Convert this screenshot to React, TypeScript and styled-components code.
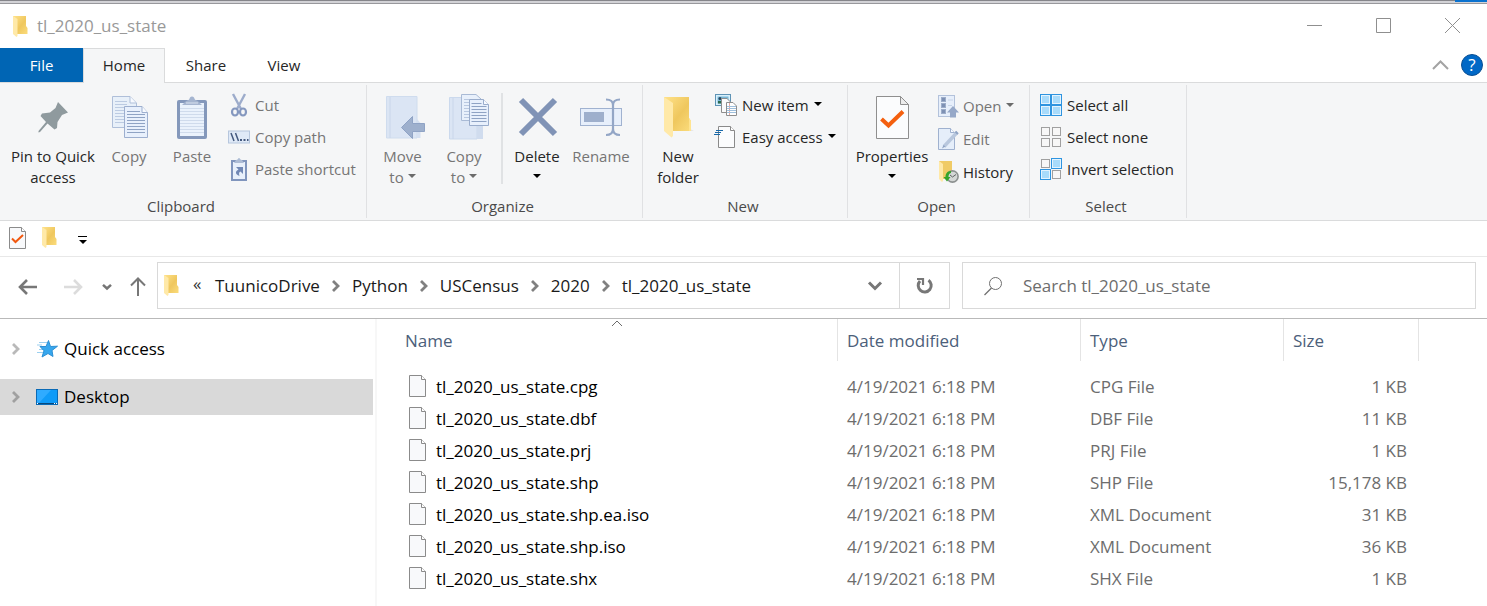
import React, { useId } from 'react';
import styled, { createGlobalStyle, css } from 'styled-components';

const GlobalStyle = createGlobalStyle`
  *, *::before, *::after { box-sizing: border-box; }
  body {
    margin: 0;
    background: #fff;
    color: #000;
    font-family: "Open Sans", "Noto Sans", sans-serif;
    font-size: 17px;
    line-height: 24px;
  }
  button, input { font: inherit; color: inherit; margin: 0; }
  svg { display: block; flex: none; overflow: visible; }
`;

/* ---------- icons ---------- */

const FolderIcon = ({ large }: { large?: boolean }) => {
  const id = useId();
  return (
    <svg width={large ? 28 : 15} height={large ? 41 : 21} viewBox={large ? '0 0 28 41' : '0 0 15 21'}>
      <defs>
        <linearGradient id={id} x1="0" x2="1" y1="0" y2="1">
          <stop offset="0" stopColor="#ffe28a" />
          <stop offset="0.55" stopColor="#efc75e" />
          <stop offset="1" stopColor="#fbdc7c" />
        </linearGradient>
      </defs>
      {large ? (
        <>
          <path d="M0 0H25V21L27 24V34H0Z" fill={`url(#${id})`} />
          <path d="M25 21L27 24V34H25Z" fill="#ffe491" />
          <path d="M0 0L9 6V39L7.500 40.500L0 34Z" fill="#ffe9a8" />
          <path d="M27 34h3l-3-1.500z" fill="#e4e4e4" />
        </>
      ) : (
        <>
          <path d="M0 0H13V10L14.500 12V18H0Z" fill={`url(#${id})`} />
          <path d="M0 0L4.500 3V20L3.500 21L0 18Z" fill="#ffe9a8" />
        </>
      )}
    </svg>
  );
};

const PageIcon = ({ checked }: { checked?: boolean }) => (
  <svg width="17" height="22" viewBox="0 0 17 22">
    <path d="M.5 .5H12.500L16.500 4.500V21.500H.5Z" fill="#f8f9fb" stroke="#8b8b8b" />
    <path d="M12.500 .5V4.500H16.500" fill="#fff" stroke="#8b8b8b" />
    {checked && <path d="M3 11.500L6.500 15L14 8" fill="none" stroke="#f1580f" strokeWidth="2" />}
  </svg>
);

const PropertiesIcon = () => (
  <svg width="33" height="43" viewBox="0 0 33 43">
    <path d="M.5 .5H24.500L32.500 8.500V42.500H.5Z" fill="#fbfcfd" stroke="#8f8f8f" />
    <path d="M24.500 .5V8.500H32.500Z" fill="#ececec" stroke="#8f8f8f" />
    <path d="M5.500 23L12.500 29.500L27 15.500" fill="none" stroke="#f4600f" strokeWidth="4" />
  </svg>
);

const PinIcon = () => (
  <svg width="31" height="31" viewBox="0 0 31 31">
    <path
      d="M20 0L30 10.500L24 13L19.500 20L19 26L16.500 27.500L9.500 21.500L2 30L.5 30.500L.5 29L8 20L2.500 14L4 11.500L12 10.500L17.500 6Z"
      fill="#8f9a9e"
    />
  </svg>
);

const sheetLines = (x: number, y: number, w: number, n: number, step: number, color: string) =>
  Array.from({ length: n }, (_, i) => (
    <path key={i} d={`M${x} ${y + i * step}h${w}`} stroke={color} />
  ));

const CopyIcon = () => (
  <svg width="39" height="43" viewBox="-2 0 39 43">
    <path d="M.5 .5H18L24.500 7V31.500H.5Z" fill="#e8f0f9" stroke="#afbfd9" />
    <path d="M18 .5V7H24" fill="#f7faff" stroke="#afbfd9" />
    {sheetLines(3, 5.5, 12, 8, 3, '#bccbe2')}
    <path d="M12.500 10.500H30L35.500 16.500V41.500H12.500Z" fill="#e8f0fc" stroke="#9dafcf" />
    <path d="M30 10.500V16.500H35.500" fill="#f7faff" stroke="#9dafcf" />
    {sheetLines(15, 15.5, 13, 1, 3, '#8fa3c4')}
    {sheetLines(15, 18.5, 18, 7, 3, '#8fa3c4')}
  </svg>
);

const PasteIcon = () => (
  <svg width="30" height="43" viewBox="0 0 30 43">
    <rect x="0" y="4" width="30" height="39" rx="2" fill="#8498bb" />
    <rect x="3" y="7" width="24" height="33" fill="#eaf2fc" />
    {sheetLines(3, 12.5, 24, 9, 3, '#cfdbec')}
    <path d="M5 9L8 6C10 4 12 5 13 1.500C14 0 16 0 17 1.500C18 5 20 4 22 6L25 9Z" fill="#a5b5d0" />
    <path d="M9 7H21" stroke="#d9e2f0" />
  </svg>
);

const CutIcon = () => (
  <svg width="22" height="24" viewBox="0 0 22 24" fill="none">
    <path d="M5 1L13 16M17 1L9 16" stroke="#9daccb" strokeWidth="2.400" />
    <ellipse cx="7" cy="19" rx="3" ry="3.500" stroke="#8598bf" strokeWidth="2.200" />
    <ellipse cx="15" cy="19" rx="3" ry="3.500" stroke="#8598bf" strokeWidth="2.200" />
  </svg>
);

const CopyPathIcon = () => (
  <svg width="22" height="14" viewBox="0 0 22 14">
    <rect x=".5" y="1" width="21" height="12" fill="#dfe9f7" stroke="#b6c6dd" />
    <path d="M3 3L6 11M7.500 3L10.500 11" stroke="#44597f" strokeWidth="1.500" />
    <path d="M12 10h2M15.500 10h2M19 10h1.500" stroke="#44597f" strokeWidth="2" />
  </svg>
);

const PasteShortcutIcon = () => (
  <svg width="22" height="23" viewBox="0 0 22 23">
    <rect x="4" y="3" width="14" height="19" fill="#e8f0fb" stroke="#8095bd" strokeWidth="2" />
    <path d="M6 5L8 2C10 2 10 0 11 0S12 2 14 2L16 5Z" fill="#adbcd5" />
    <path d="M8 9H15V16L12.500 13.500C10.500 14.500 11 16 11.500 18C7 16.500 7 13 10.500 11.500Z" fill="#7188b5" />
  </svg>
);

const MoveIcon = () => (
  <svg width="47" height="43" viewBox="-7 0 47 43">
    <path d="M.5 .5H31V42H.5Z" fill="#dbe5f4" stroke="#cfdcee" />
    <path d="M4 1V42" stroke="#c9d6ea" />
    <path d="M31 23L34.500 27V42H31Z" fill="#d5e0f1" />
    <path d="M15.500 31.500L26.500 20.500V27.500H38.500V35.500H26.500V42.500Z" fill="#9eb0cd" stroke="#8fa3c5" />
  </svg>
);

const CopyToIcon = () => (
  <svg width="50" height="46" viewBox="-10 0 50 46">
    <path d="M.5 3.500H28V45H.5Z" fill="#dbe5f4" stroke="#cbd9ed" />
    <path d="M4 4V45" stroke="#c9d6ea" />
    <path d="M28 30H34V45H28Z" fill="#d0dcee" />
    <path d="M12.500 .5H27L32 5V26.500H12.500Z" fill="#e8f0fb" stroke="#a9bad5" />
    {sheetLines(15, 5.5, 7, 7, 3, '#b9c8e0')}
    <path d="M20.500 5.500H34.500L39.500 10.500V31.500H20.500Z" fill="#e8f0fc" stroke="#9aadcc" />
    <path d="M34.500 5.500V10.500H39.500" fill="#f7faff" stroke="#9aadcc" />
    {sheetLines(22.5, 9.5, 10, 1, 3, '#8fa3c4')}
    {sheetLines(22.5, 12.5, 15, 6, 3, '#8fa3c4')}
  </svg>
);

const DeleteIcon = () => (
  <svg width="38" height="38" viewBox="-1 0 38 38">
    <path d="M2 2L36 36M36 2L2 36" stroke="#8093b6" strokeWidth="6" />
  </svg>
);

const RenameIcon = () => (
  <svg width="42" height="38" viewBox="0 0 42 38">
    <rect x=".5" y="10.500" width="41" height="17" fill="#e7effb" stroke="#a0b2d0" />
    <rect x="4" y="14" width="20" height="10" fill="#9eafcc" />
    <path
      d="M26 1.500C31 1.500 33 3 33 7V31C33 35 31 37 26 37M40 1.500C35 1.500 33 3 33 7M33 31C33 35 35 37 40 37"
      fill="none"
      stroke="#93a6c6"
      strokeWidth="2.200"
    />
  </svg>
);

const NewItemIcon = () => (
  <svg width="22" height="22" viewBox="0 0 22 22">
    <rect x=".5" y=".5" width="15" height="11" fill="#d8f0fc" stroke="#5e93b5" />
    <rect x="2.500" y="2.500" width="11" height="7" fill="#79b7d6" />
    <circle cx="5" cy="4.500" r="1.500" fill="#24445c" />
    <path d="M3 9.500V7h4v2.500z" fill="#2d6b50" />
    <path d="M6.500 4.500H12L15.500 8V18.500H6.500Z" fill="#fbfbfb" stroke="#8e8e8e" />
    <path d="M11.500 8.500H18L21.500 12V21.500H11.500Z" fill="#fff" stroke="#8e8e8e" />
    <path d="M14.500 9V21" stroke="#e7a6a0" />
    {sheetLines(12, 12.5, 9, 4, 2, '#9fc0dd')}
  </svg>
);

const EasyAccessIcon = () => (
  <svg width="22" height="22" viewBox="0 0 22 22">
    <path d="M3.500 .5H15.500L19.500 4.500V21.500H3.500Z" fill="#fbfcfd" stroke="#8a8a8a" />
    <path d="M15.500 .5V4.500H19.500" fill="#fff" stroke="#8a8a8a" />
    <path d="M1 4.500H8M0 6.500H6M-1 8.500H5" stroke="#1868a8" strokeWidth="1.200" />
  </svg>
);

const OpenIcon = () => (
  <svg width="20" height="23" viewBox="0 0 20 23">
    <rect x=".5" y=".5" width="16" height="21" fill="#e7effb" stroke="#b3c2db" />
    {[2, 8, 14].map((y) => (
      <rect key={y} x="3.500" y={y + 0.5} width="4" height="4" fill="#7e91b4" stroke="#9dadc9" />
    ))}
    <path d="M10 5h5M10 10.500h4" stroke="#c7d4e8" />
    <path d="M15 11L21 17.500H18V22.500H12V17.500H9Z" fill="#96a8c8" />
  </svg>
);

const EditIcon = () => (
  <svg width="20" height="22" viewBox="0 0 20 22">
    <path d="M.5 .5H12.500L16.500 4.500V21.500H.5Z" fill="#e5eefa" stroke="#9fb1cf" />
    <path d="M12.500 .5V4.500H16.500" fill="#f6faff" stroke="#9fb1cf" />
    <path d="M6 18.500L19 4.500" stroke="#b8c7dd" strokeWidth="3.500" />
    <path d="M4 20.500L7.500 18.500L5.500 17Z" fill="#8fa3c4" />
    <path d="M17.500 3.500L20 6" stroke="#8fa3c4" strokeWidth="2" />
  </svg>
);

const HistoryIcon = () => (
  <svg width="20" height="22" viewBox="0 0 20 22">
    <path d="M1 0H14V18H1Z" fill="#f0cb66" />
    <path d="M1 0L5 3V20L4 21L1 18Z" fill="#ffe9a8" />
    <circle cx="14.500" cy="15.500" r="5.600" fill="#d4d7d6" stroke="#8c9190" strokeWidth="1.600" />
    <path d="M12 14L14.500 16L18 13.500" fill="none" stroke="#5e6463" />
    <path d="M13 10C9 10 7.500 13 7.500 16H5.500L9 20.500L12.500 16H10.500C10.500 14 11 12.500 13 12Z" fill="#35a52c" />
  </svg>
);

const SelectIcon = ({ on }: { on: [boolean, boolean, boolean, boolean] }) => (
  <svg width="22" height="22" viewBox="0 0 22 22">
    {on.map((active, i) => {
      const x = (i % 2) * 11;
      const y = Math.floor(i / 2) * 11;
      return active ? (
        <g key={i}>
          <rect x={x + 0.5} y={y + 0.5} width="10" height="10" fill="#e3f3fe" stroke="#2e94e0" />
          <rect x={x + 2} y={y + 2} width="7" height="7" fill="#a8dbfb" />
        </g>
      ) : (
        <rect key={i} x={x + 1.5} y={y + 1.5} width="8" height="8" fill="#f7f7f7" stroke="#a0a0a0" />
      );
    })}
  </svg>
);

const Stroke = ({ w, h, d, color, width = 2 }: { w: number; h: number; d: string; color: string; width?: number }) => (
  <svg width={w} height={h} viewBox={`0 0 ${w} ${h}`}>
    <path d={d} fill="none" stroke={color} strokeWidth={width} />
  </svg>
);

const Chevron = ({ color = '#808080' }: { color?: string }) => (
  <Stroke w={8} h={12} d="M1 1L6 6L1 11" color={color} width={2.8} />
);

const DownChevron = ({ small }: { small?: boolean }) =>
  small ? (
    <Stroke w={10} h={6} d="M1 .8L5 4.500L9 .8" color="#757575" width={2.5} />
  ) : (
    <Stroke w={14} h={9} d="M1 1.500L7 7.500L13 1.500" color="#777" width={3} />
  );

const StarIcon = () => (
  <svg width="22" height="18" viewBox="0 0 22 18">
    <path d="M3 2.500H11M1 5H6M3 9.500H8M1 12.500H7" stroke="#9bd0f0" strokeWidth="1.200" />
    <path d="M12.500 .5L14.500 6.500L21.500 6.200L16 10.500L17 16.500L12 13.500L6 17L8 10.800L4 6.500L10 6.500Z" fill="#36a7ee" stroke="#2c8fd4" />
  </svg>
);

const DesktopIcon = () => (
  <svg width="22" height="16" viewBox="0 0 22 16">
    <rect x=".5" y=".5" width="21" height="15" fill="#0f9bf8" stroke="#0a6ab6" />
    <path d="M1 1H15L3 14H1Z" fill="#2fabff" />
    <path d="M1 14.500H21" stroke="#07487c" />
    <path d="M1 14.500h1M18 14.500h1M20 14.500h1" stroke="#fff" />
  </svg>
);

const RefreshIcon = () => (
  <svg width="18" height="18" viewBox="0 0 18 18">
    <path d="M12.500 3.200A6.500 6.500 0 1 1 4 4" fill="none" stroke="#777" strokeWidth="3" />
    <path d="M1 2H7V8" fill="none" stroke="#777" strokeWidth="2.200" />
  </svg>
);

/* ---------- window frame ---------- */

const Window = styled.div`
  display: flex;
  flex-direction: column;
  min-height: 100vh;
`;

const TopEdge = styled.div`
  display: flex;
  justify-content: flex-end;
  height: 4px;
  background: linear-gradient(#85858a 1px, #d2d2d6 1px);
  border-bottom: 1px solid #98989c;
  &::after {
    content: "";
    width: 32px;
    height: 2px;
    background: #0a72cf;
  }
`;

const TitleBar = styled.header`
  display: flex;
  align-items: center;
  height: 44px;
  padding-left: 13px;
`;

const Title = styled.h1`
  flex: 1;
  margin: 0 0 0 9px;
  font-size: 17px;
  font-weight: 400;
  color: #999;
`;

const plainButton = css`
  display: flex;
  align-items: center;
  justify-content: center;
  padding: 0;
  border: 0;
  background: none;
`;

const WindowButton = styled.button`
  ${plainButton}
  align-self: flex-start;
  width: 69px;
  height: 42px;
`;

/* ---------- ribbon ---------- */

const TabBar = styled.nav`
  display: flex;
  height: 35px;
  border-bottom: 1px solid #dadbdc;
  font-size: 15px;
`;

const Tab = styled.button<{ $kind?: 'file' | 'active'; $width: number }>`
  ${plainButton}
  width: ${(p) => p.$width}px;
  height: 35px;
  padding-bottom: 2px;
  color: #262626;
  ${(p) => p.$kind === 'file' && css`
    height: 34px;
    padding-bottom: 0;
    color: #fff;
    background: #0065b4;
  `}
  ${(p) => p.$kind === 'active' && css`
    background: #f5f6f7;
    border: 1px solid #dadbdc;
    border-bottom: 0;
  `}
`;

const TabTools = styled.div`
  display: flex;
  align-items: center;
  gap: 12px;
  margin-left: auto;
  padding-right: 4px;
`;

const IconButton = styled.button`
  ${plainButton}
`;

const HelpButton = styled.button`
  ${plainButton}
  width: 22px;
  height: 22px;
  border: 1px solid #0a4f93;
  border-radius: 50%;
  background: #0068c6;
  color: #fff;
  font-size: 17px;
  line-height: 20px;
`;

const Ribbon = styled.section`
  display: flex;
  height: 138px;
  padding: 2px 0;
  background: #f5f6f7;
  border-bottom: 1px solid #dadbdc;
  font-size: 15px;
  line-height: 21px;
  color: #262626;
`;

const Group = styled.div<{ $width: number }>`
  display: flex;
  flex-direction: column;
  flex: none;
  width: ${(p) => p.$width}px;
  border-right: 1px solid #e0e1e3;
`;

const GroupBody = styled.div<{ $indent?: number }>`
  display: flex;
  flex: 1;
  padding-left: ${(p) => p.$indent ?? 0}px;
`;

const GroupLabel = styled.div`
  padding: 0 4px 1px 0;
  text-align: center;
  color: #4a4a4a;
`;

const BigButton = styled.button<{ $width: number; $dim?: boolean }>`
  ${plainButton}
  flex-direction: column;
  justify-content: flex-start;
  width: ${(p) => p.$width}px;
  color: ${(p) => (p.$dim ? '#757575' : '#262626')};
  white-space: nowrap;
`;

const BigIcon = styled.span`
  display: flex;
  align-items: center;
  justify-content: center;
  height: 46px;
  margin: 9px 0 6px;
`;

const Line = styled.span`
  display: flex;
  align-items: center;
  gap: 4px;
  height: 21px;
`;

const Stack = styled.div<{ $loose?: boolean }>`
  display: flex;
  flex-direction: column;
  align-items: flex-start;
  gap: ${(p) => (p.$loose ? 11 : 10)}px;
  padding: ${(p) => (p.$loose ? 10 : 9)}px 0 0 2px;
`;

const SmallButton = styled.button<{ $dim?: boolean }>`
  ${plainButton}
  gap: 5px;
  height: 22px;
  color: ${(p) => (p.$dim ? '#757575' : '#262626')};
  white-space: nowrap;
`;

const Caret = styled.span<{ $dim?: boolean }>`
  border: 4px solid transparent;
  border-top-color: ${(p) => (p.$dim ? '#6b6b6b' : '#000')};
  border-bottom: 0;
`;

const MenuCaret = styled(Caret)`
  margin-bottom: 3px;
`;

const Separator = styled.div`
  width: 2px;
  height: 91px;
  margin: 8px 5px 0 6px;
  background: #e0e2e4;
`;

type BigProps = { icon: React.ReactNode; lines: string[]; width: number; dim?: boolean; menu?: boolean };

const Big = ({ icon, lines, width, dim, menu }: BigProps) => (
  <BigButton type="button" $width={width} $dim={dim}>
    <BigIcon>{icon}</BigIcon>
    {lines.map((text, i) => (
      <Line key={i}>
        {text}
        {menu && i === lines.length - 1 && <MenuCaret $dim={dim} />}
      </Line>
    ))}
  </BigButton>
);

type SmallProps = { icon: React.ReactNode; text: string; dim?: boolean; menu?: boolean };

const Small = ({ icon, text, dim, menu }: SmallProps) => (
  <SmallButton type="button" $dim={dim}>
    {icon}
    {text}
    {menu && <MenuCaret $dim={dim} />}
  </SmallButton>
);

/* ---------- toolbars ---------- */

const QuickBar = styled.div`
  display: flex;
  align-items: center;
  height: 36px;
  padding: 0 0 2px 9px;
  gap: 16px;
  border-bottom: 1px solid #e8e8e8;
`;

const CustomizeButton = styled.button`
  ${plainButton}
  flex-direction: column;
  gap: 3px;
  margin: 4px 0 0 5px;
  &::before {
    content: "";
    width: 9px;
    height: 1px;
    background: #000;
  }
`;

const AddressRow = styled.div`
  display: flex;
  align-items: center;
  height: 62px;
  padding: 0 11px 4px 0;
  border-bottom: 1px solid #b9b9b9;
`;

const History = styled.div`
  display: flex;
  align-items: center;
  flex: none;
  width: 157px;
  padding: 2px 0 0 18px;
`;

const NavButton = styled.button<{ $space: number }>`
  ${plainButton}
  margin-right: ${(p) => p.$space}px;
`;

const AddressBox = styled.div`
  display: flex;
  flex: 1 1 793px;
  align-items: center;
  height: 47px;
  padding-left: 6px;
  border: 1px solid #d9d9d9;
`;

const Crumbs = styled.ol`
  display: flex;
  flex: 1;
  align-items: center;
  margin: 0;
  padding: 0 0 0 14px;
  list-style: none;
`;

const Crumb = styled.li`
  display: flex;
  align-items: center;
`;

const CrumbLink = styled.a`
  color: #1a1a1a;
  text-decoration: none;
`;

const CrumbArrow = styled.span`
  display: flex;
  justify-content: center;
  width: 32px;
`;

const Overflow = styled.li`
  width: 22px;
  padding-bottom: 4px;
  color: #333;
`;

const RefreshButton = styled.button`
  ${plainButton}
  width: 50px;
  height: 45px;
  margin-left: 17px;
  border-left: 1px solid #d9d9d9;
`;

const SearchBox = styled.label`
  display: flex;
  flex: 1 1 514px;
  align-items: center;
  gap: 21px;
  height: 47px;
  margin-left: 12px;
  padding: 0 12px 0 21px;
  border: 1px solid #d9d9d9;
`;

const SearchInput = styled.input`
  flex: 1;
  min-width: 0;
  padding: 0;
  border: 0;
  outline: 0;
  background: none;
  &::placeholder { color: #6d6d6d; opacity: 1; }
`;

/* ---------- content ---------- */

const Content = styled.main`
  display: flex;
  flex: 1;
`;

const Sidebar = styled.nav`
  display: flex;
  flex-direction: column;
  flex: none;
  gap: 12px;
  width: 377px;
  padding: 12px 2px 0 0;
  border-right: 2px solid #f7f7f7;
`;

const SideItem = styled.a<{ $selected?: boolean }>`
  display: flex;
  align-items: center;
  height: 36px;
  padding-left: 12px;
  background: ${(p) => (p.$selected ? '#d9d9d9' : 'none')};
  color: #000;
  text-decoration: none;
`;

const SideIcon = styled.span`
  width: 22px;
  margin: 0 6px 0 16px;
`;

const Files = styled.table`
  flex: 1;
  align-self: flex-start;
  table-layout: fixed;
  width: 100%;
  border-collapse: separate;
  border-spacing: 0;
  tbody::before {
    content: "";
    display: block;
    height: 10px;
  }
`;

const Col = styled.col<{ $width?: number }>`
  width: ${(p) => (p.$width ? `${p.$width}px` : 'auto')};
`;

const HeadCell = styled.th<{ $first?: boolean }>`
  position: relative;
  height: 42px;
  padding: 2px 0 0 ${(p) => (p.$first ? 28 : 9)}px;
  border-right: 1px solid #e4e4e4;
  color: #4c607a;
  font-weight: 400;
  text-align: left;
`;

const SortMark = styled.span`
  position: absolute;
  top: 1px;
  left: 20px;
  right: 0;
  display: flex;
  justify-content: center;
`;

const Cell = styled.td<{ $end?: boolean }>`
  height: 32px;
  padding: 0 ${(p) => (p.$end ? 12 : 0)}px 0 9px;
  color: #6d6d6d;
  text-align: ${(p) => (p.$end ? 'right' : 'left')};
  white-space: nowrap;
`;

const NameCell = styled(Cell)`
  padding-left: 32px;
  color: #000;
`;

const FileName = styled.span`
  display: flex;
  align-items: flex-start;
  gap: 10px;
`;

const crumbs = ['TuunicoDrive', 'Python', 'USCensus', '2020', 'tl_2020_us_state'];

const files = [
  ['tl_2020_us_state.cpg', 'CPG File', '1 KB'],
  ['tl_2020_us_state.dbf', 'DBF File', '11 KB'],
  ['tl_2020_us_state.prj', 'PRJ File', '1 KB'],
  ['tl_2020_us_state.shp', 'SHP File', '15,178 KB'],
  ['tl_2020_us_state.shp.ea.iso', 'XML Document', '31 KB'],
  ['tl_2020_us_state.shp.iso', 'XML Document', '36 KB'],
  ['tl_2020_us_state.shx', 'SHX File', '1 KB'],
];

export default function App() {
  return (
    <Window>
      <GlobalStyle />
      <TopEdge />
      <TitleBar>
        <FolderIcon />
        <Title>tl_2020_us_state</Title>
        <WindowButton type="button" aria-label="Minimize">
          <Stroke w={15} h={15} d="M0 7.500H15" color="#8f8f8f" width={1} />
        </WindowButton>
        <WindowButton type="button" aria-label="Maximize">
          <Stroke w={15} h={15} d="M.5 .5H14.500V14.500H.5Z" color="#8f8f8f" width={1} />
        </WindowButton>
        <WindowButton type="button" aria-label="Close">
          <Stroke w={15} h={15} d="M0 0L15 15M15 0L0 15" color="#8f8f8f" width={1} />
        </WindowButton>
      </TitleBar>

      <TabBar>
        <Tab type="button" $kind="file" $width={83}>File</Tab>
        <Tab type="button" $kind="active" $width={82}>Home</Tab>
        <Tab type="button" $width={82}>Share</Tab>
        <Tab type="button" $width={74}>View</Tab>
        <TabTools>
          <IconButton type="button" aria-label="Minimize the ribbon">
            <Stroke w={17} h={10} d="M1 9L8.500 1.500L16 9" color="#a3a3a3" width={2} />
          </IconButton>
          <HelpButton type="button">?</HelpButton>
        </TabTools>
      </TabBar>

      <Ribbon>
        <Group $width={367}>
          <GroupBody $indent={6}>
            <Big icon={<PinIcon />} lines={['Pin to Quick', 'access']} width={94} />
            <Big icon={<CopyIcon />} lines={['Copy']} width={58} dim />
            <Big icon={<PasteIcon />} lines={['Paste']} width={68} dim />
            <Stack>
              <Small icon={<CutIcon />} text="Cut" dim />
              <Small icon={<CopyPathIcon />} text="Copy path" dim />
              <Small icon={<PasteShortcutIcon />} text="Paste shortcut" dim />
            </Stack>
          </GroupBody>
          <GroupLabel>Clipboard</GroupLabel>
        </Group>
        <Group $width={276}>
          <GroupBody $indent={5}>
            <Big icon={<MoveIcon />} lines={['Move', 'to']} width={61} dim menu />
            <Big icon={<CopyToIcon />} lines={['Copy', 'to']} width={62} dim menu />
            <Separator />
            <Big icon={<DeleteIcon />} lines={['Delete', '']} width={58} menu />
            <Big icon={<RenameIcon />} lines={['Rename']} width={70} dim />
          </GroupBody>
          <GroupLabel>Organize</GroupLabel>
        </Group>
        <Group $width={205}>
          <GroupBody>
            <Big icon={<FolderIcon large />} lines={['New', 'folder']} width={70} />
            <Stack>
              <Small icon={<NewItemIcon />} text="New item" menu />
              <Small icon={<EasyAccessIcon />} text="Easy access" menu />
            </Stack>
          </GroupBody>
          <GroupLabel>New</GroupLabel>
        </Group>
        <Group $width={182}>
          <GroupBody>
            <Big icon={<PropertiesIcon />} lines={['Properties', '']} width={88} menu />
            <Stack $loose>
              <Small icon={<OpenIcon />} text="Open" dim menu />
              <Small icon={<EditIcon />} text="Edit" dim />
              <Small icon={<HistoryIcon />} text="History" />
            </Stack>
          </GroupBody>
          <GroupLabel>Open</GroupLabel>
        </Group>
        <Group $width={157}>
          <GroupBody $indent={8}>
            <Stack>
              <Small icon={<SelectIcon on={[true, true, true, true]} />} text="Select all" />
              <Small icon={<SelectIcon on={[false, false, false, false]} />} text="Select none" />
              <Small icon={<SelectIcon on={[false, true, true, false]} />} text="Invert selection" />
            </Stack>
          </GroupBody>
          <GroupLabel>Select</GroupLabel>
        </Group>
      </Ribbon>

      <QuickBar>
        <IconButton type="button" aria-label="Properties"><PageIcon checked /></IconButton>
        <IconButton type="button" aria-label="New folder"><FolderIcon /></IconButton>
        <CustomizeButton type="button" aria-label="Customize toolbar"><Caret /></CustomizeButton>
      </QuickBar>

      <AddressRow>
        <History>
          <NavButton type="button" aria-label="Back" $space={27}>
            <Stroke w={19} h={16} d="M19 8H2M9 1L2 8L9 15" color="#777" width={2.6} />
          </NavButton>
          <NavButton type="button" aria-label="Forward" $space={19}>
            <Stroke w={19} h={16} d="M0 8H17M10 1L17 8L10 15" color="#dcdcdc" width={2.6} />
          </NavButton>
          <NavButton type="button" aria-label="Recent locations" $space={18}>
            <DownChevron small />
          </NavButton>
          <NavButton type="button" aria-label="Up" $space={0}>
            <Stroke w={16} h={19} d="M8 19V1.500M1 8.500L8 1.500L15 8.500" color="#777" width={2} />
          </NavButton>
        </History>
        <AddressBox>
          <FolderIcon />
          <Crumbs>
            <Overflow>«</Overflow>
            {crumbs.map((name, i) => (
              <Crumb key={name}>
                <CrumbLink href="#">{name}</CrumbLink>
                {i < crumbs.length - 1 && <CrumbArrow><Chevron /></CrumbArrow>}
              </Crumb>
            ))}
          </Crumbs>
          <IconButton type="button" aria-label="Previous locations"><DownChevron /></IconButton>
          <RefreshButton type="button" aria-label="Refresh"><RefreshIcon /></RefreshButton>
        </AddressBox>
        <SearchBox>
          <svg width="18" height="18" viewBox="0 0 18 18">
            <circle cx="11.500" cy="6.500" r="6" fill="none" stroke="#6f6f6f" />
            <path d="M7.500 11L.5 18" stroke="#6f6f6f" strokeWidth="1.200" />
          </svg>
          <SearchInput type="text" aria-label="Search" placeholder="Search tl_2020_us_state" />
        </SearchBox>
      </AddressRow>

      <Content>
        <Sidebar>
          <SideItem href="#">
            <Chevron color="#b9b9b9" />
            <SideIcon><StarIcon /></SideIcon>
            Quick access
          </SideItem>
          <SideItem href="#" $selected>
            <Chevron color="#a0a0a0" />
            <SideIcon><DesktopIcon /></SideIcon>
            Desktop
          </SideItem>
        </Sidebar>
        <Files>
          <colgroup>
            <Col $width={461} />
            <Col $width={243} />
            <Col $width={203} />
            <Col $width={135} />
            <Col />
          </colgroup>
          <thead>
            <tr>
              <HeadCell $first>
                Name
                <SortMark>
                  <Stroke w={12} h={7} d="M1 6L6 1L11 6" color="#6b6b6b" width={1} />
                </SortMark>
              </HeadCell>
              <HeadCell>Date modified</HeadCell>
              <HeadCell>Type</HeadCell>
              <HeadCell>Size</HeadCell>
            </tr>
          </thead>
          <tbody>
            {files.map(([name, type, size]) => (
              <tr key={name}>
                <NameCell><FileName><PageIcon />{name}</FileName></NameCell>
                <Cell>4/19/2021 6:18 PM</Cell>
                <Cell>{type}</Cell>
                <Cell $end>{size}</Cell>
              </tr>
            ))}
          </tbody>
        </Files>
      </Content>
    </Window>
  );
}
